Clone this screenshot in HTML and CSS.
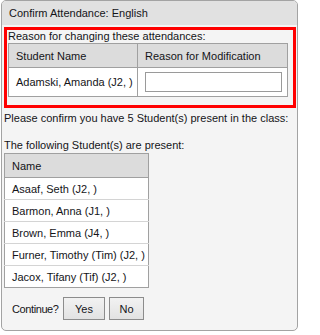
FILE: index.html
```html
<!DOCTYPE html>
<html lang="en">
<head>
<meta charset="utf-8">
<title>Confirm Attendance</title>
<link rel="stylesheet" href="styles.css">
</head>
<body>
<div class="dialog">
  <div class="title">Confirm Attendance: English</div>
  <div class="content">
    <div class="reason-box">
      <div class="label">Reason for changing these attendances:</div>
      <table class="grid reason">
        <thead>
          <tr><th class="c-name">Student Name</th><th class="c-reason">Reason for Modification</th></tr>
        </thead>
        <tbody>
          <tr><td>Adamski, Amanda (J2, )</td><td><input class="reason-input" type="text"></td></tr>
        </tbody>
      </table>
    </div>
    <p class="msg first">Please confirm you have 5 Student(s) present in the class:</p>
    <p class="msg second">The following Student(s) are present:</p>
    <table class="grid present">
      <thead><tr><th>Name</th></tr></thead>
      <tbody>
        <tr><td>Asaaf, Seth (J2, )</td></tr>
        <tr><td>Barmon, Anna (J1, )</td></tr>
        <tr><td>Brown, Emma (J4, )</td></tr>
        <tr><td>Furner, Timothy (Tim) (J2, )</td></tr>
        <tr><td>Jacox, Tifany (Tif) (J2, )</td></tr>
      </tbody>
    </table>
    <div class="actions">
      <span class="continue">Continue?</span>
      <button class="btn btn-yes" type="button">Yes</button>
      <button class="btn btn-no" type="button">No</button>
    </div>
  </div>
</div>
</body>
</html>
```
FILE: styles.css
```css
html, body {
  margin: 0;
  padding: 0;
  background: #ffffff;
}
body {
  padding: 0 0 0 1px;
  font-family: "Liberation Sans", Arial, sans-serif;
  font-size: 11px;
  color: #141418;
}
.dialog {
  box-sizing: border-box;
  width: 297px;
  height: 331px;
  border: 1px solid #a3a3a3;
  border-radius: 5px;
  background: #f4f4f4;
  overflow: hidden;
}
.title {
  height: 24px;
  line-height: 24px;
  padding-left: 7px;
  background: #e1e1e1;
}
.content {
  padding: 2px 1px 0 2px;
}
.reason-box {
  box-sizing: border-box;
  width: 292px;
  height: 81px;
  border: 3px solid #ff0000;
  padding: 0 0 0 1px;
}
.label {
  line-height: 13px;
  height: 13px;
}
.grid {
  border-collapse: collapse;
  background: #ffffff;
}
.grid th, .grid td {
  text-align: left;
  font-weight: normal;
  padding: 0 0 0 7px;
  white-space: nowrap;
}
.grid th {
  background: #dcdcdc;
}
.reason {
  width: 280px;
  border: 1px solid #a0a0a0;
}
.reason th, .reason td {
  border: 1px solid #a0a0a0;
}
.reason thead tr { height: 24px; }
.reason tbody tr { height: 29px; }
.reason .c-name { width: 121px; }
.reason-input {
  box-sizing: border-box;
  display: block;
  width: 137px;
  height: 20px;
  margin: 0;
  border: 1px solid #9a9a9a;
  background: #ffffff;
}
.msg {
  margin: 0;
  line-height: 13px;
}
.msg.first { margin-top: 4px; }
.msg.second { margin-top: 14px; }
.present {
  margin-top: 1px;
  width: 145px;
  border: 1px solid #a0a0a0;
}
.present th {
  border-bottom: 1px solid #a0a0a0;
}
.present td {
  border-top: 1px solid #d4d4d4;
}
.present thead tr { height: 24px; }
.present tbody tr { height: 22px; }
.actions {
  display: flex;
  align-items: center;
  gap: 4px;
  margin-top: 9px;
  padding-left: 8px;
}
.continue {
  width: 51px;
  margin-right: -4px;
  letter-spacing: -0.4px;
  white-space: nowrap;
}
.btn {
  box-sizing: border-box;
  height: 23px;
  padding: 0;
  border: 1px solid #8c8c8c;
  border-radius: 0;
  background: linear-gradient(#f2f2f2, #e2e2e2);
  font-family: "Liberation Sans", Arial, sans-serif;
  font-size: 11px;
  color: #141418;
}
.btn-yes { width: 42px; }
.btn-no { width: 35px; }
```
